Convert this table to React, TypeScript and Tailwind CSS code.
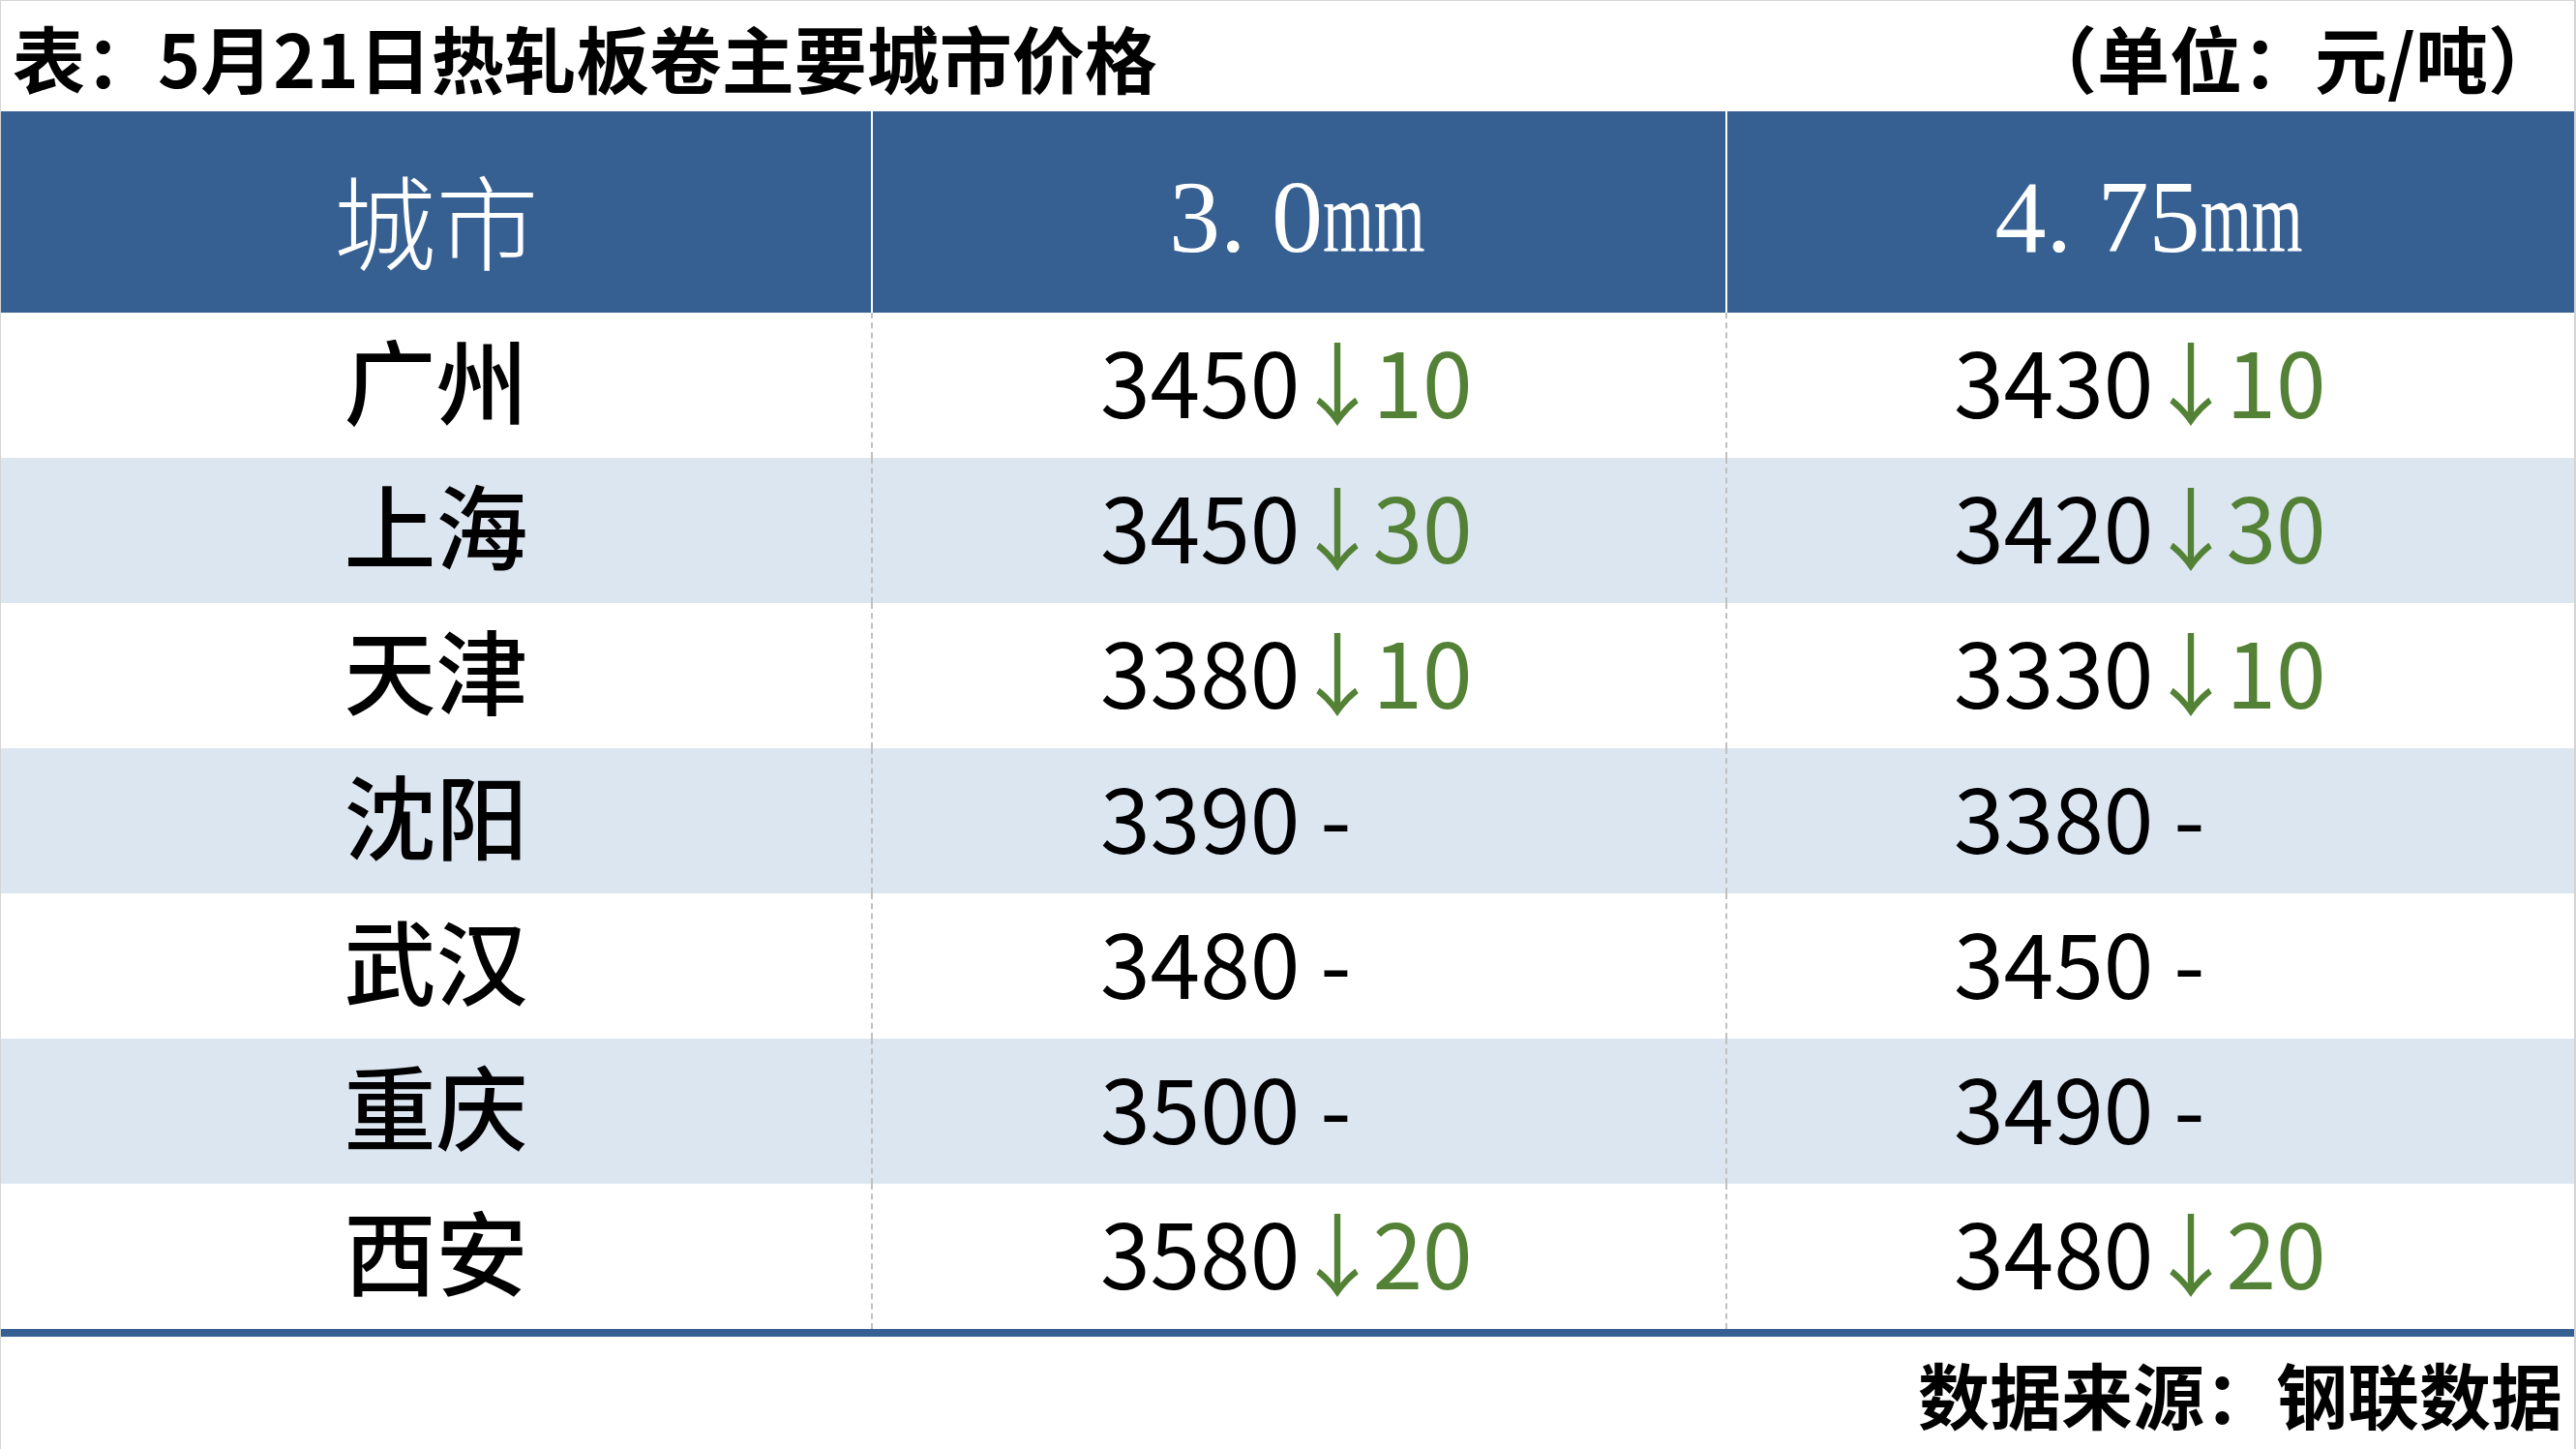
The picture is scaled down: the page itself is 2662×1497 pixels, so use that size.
// 热轧板卷主要城市价格表

const rows = [
  { city: '广州', a: '3450', ad: '10', b: '3430', bd: '10' },
  { city: '上海', a: '3450', ad: '30', b: '3420', bd: '30' },
  { city: '天津', a: '3380', ad: '10', b: '3330', bd: '10' },
  { city: '沈阳', a: '3390', ad: '', b: '3380', bd: '' },
  { city: '武汉', a: '3480', ad: '', b: '3450', bd: '' },
  { city: '重庆', a: '3500', ad: '', b: '3490', bd: '' },
  { city: '西安', a: '3580', ad: '20', b: '3480', bd: '20' },
];

function Price({ value, diff }: { value: string; diff: string }) {
  if (!diff) {
    return <span className="whitespace-nowrap">{value} -</span>;
  }
  return (
    <span className="whitespace-nowrap">
      {value.slice(0, -1)}
      <span className="tracking-[-8px]">{value.slice(-1)}</span>
      <span className="text-[#538135]">
        <span className="tracking-[-10px]">↓</span>
        {diff}
      </span>
    </span>
  );
}

function Mm() {
  return (
    <span className="inline-block w-[110px] text-left">
      <span className="inline-block origin-left scale-x-[0.64]">mm</span>
    </span>
  );
}

export default function App() {
  return (
    <div className="w-[2662px] h-[1497px] bg-white border-t border-l border-r-2 border-[#d4d4d4] flex flex-col font-['Noto_Sans_CJK_SC',sans-serif] text-black">
      {/* 标题 */}
      <div className="h-[114px] flex items-center justify-between pl-[12px] pr-[14px] font-bold text-[75px] leading-none">
        <span>表：5月21日热轧板卷主要城市价格</span>
        <span>（单位：元/吨）</span>
      </div>

      {/* 表头 */}
      <div className="h-[208px] grid grid-cols-[899px_883px_1fr] bg-[#376092] text-white font-['Liberation_Serif','Noto_Sans_CJK_SC',serif] text-[106px] leading-none">
        <div className="flex items-center justify-center pt-[12px] font-['Noto_Sans_CJK_SC',sans-serif] font-light">城市</div>
        <div className="flex items-center justify-center pt-[12px] border-l-2 border-white whitespace-pre">
          3. 0<Mm />
        </div>
        <div className="flex items-center justify-center pt-[12px] border-l-2 border-white whitespace-pre">
          4. 75<Mm />
        </div>
      </div>

      {/* 数据行 */}
      <div className="flex flex-col">
        {rows.map((r, i) => (
          <div
            key={r.city}
            className={`h-[150px] grid grid-cols-[899px_883px_1fr] text-[93px] leading-none ${i % 2 === 1 ? 'bg-[#dce6f1]' : 'bg-white'}`}
          >
            <div className="flex items-center justify-center pb-[16px] text-[95px] font-medium">{r.city}</div>
            <div className="flex items-center pb-[14px] pl-[235px] border-l-2 border-dashed border-[#c0c0c0]">
              <Price value={r.a} diff={r.ad} />
            </div>
            <div className="flex items-center pb-[14px] pl-[234px] border-l-2 border-dashed border-[#c0c0c0]">
              <Price value={r.b} diff={r.bd} />
            </div>
          </div>
        ))}
      </div>

      <div className="h-[8px] bg-[#376092]" />

      {/* 数据来源 */}
      <div className="flex-1 flex items-center justify-end pr-[12px] font-bold text-[74px] leading-none">
        数据来源：钢联数据
      </div>
    </div>
  );
}
